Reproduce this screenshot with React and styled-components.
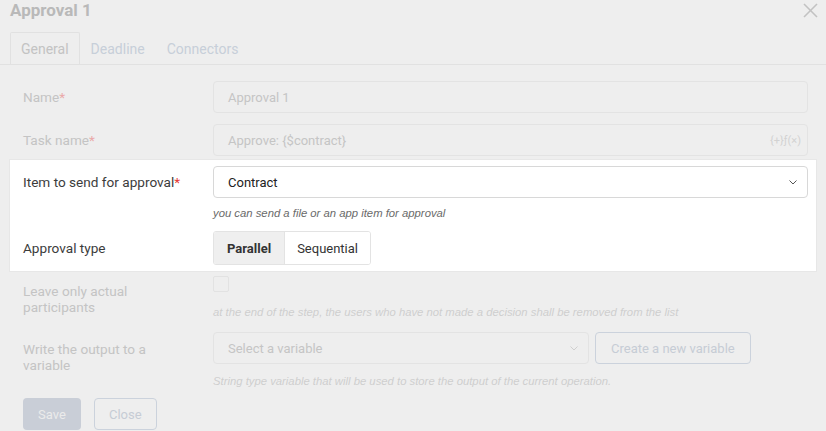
import React from "react";
import styled, { createGlobalStyle } from "styled-components";

const Global = createGlobalStyle`
  html, body { margin: 0; padding: 0; background: #eeeeee; }
  * { box-sizing: border-box; }
`;

const Dialog = styled.div`
  width: 826px;
  height: 431px;
  overflow: hidden;
  background: #eeeeee;
  font-family: Roboto, "Liberation Sans", sans-serif;
  font-size: 13px;
`;

const Header = styled.div`
  display: flex;
  justify-content: space-between;
  align-items: flex-start;
  height: 32px;
  padding: 0 8px 0 10px;
`;

const Title = styled.h1`
  margin: 0;
  font-size: 17px;
  line-height: 20px;
  font-weight: 700;
  color: #b9b9b9;
`;

const CloseIcon = styled.svg`
  margin-top: 3px;
  width: 15px;
  height: 15px;
`;

const Tabs = styled.div`
  display: flex;
  height: 33px;
  padding-left: 10px;
  border-bottom: 1px solid #e1e1e1;
`;

const Tab = styled.div`
  display: flex;
  align-items: center;
  padding: 0 10px;
  height: 33px;
  border: 1px solid ${(p) => (p.$active ? "#e1e1e1" : "transparent")};
  border-bottom: none;
  border-radius: 2px 2px 0 0;
  color: ${(p) => (p.$active ? "#c3c3c3" : "#c7cfd9")};
  font-size: 14px;
`;

const Form = styled.div`
  --label: #c4c4c4;
  --text: #c5c5c5;
  --border: #e3e3e3;
  --field-bg: #eeeeee;
  --hint: #cecece;
  --req: #eaa9a9;
  padding: 16px 18px 0 23px;
  display: flex;
  flex-direction: column;
`;

const Highlight = styled.div`
  --label: #3c3c3c;
  --text: #222222;
  --border: #d8d8d8;
  --field-bg: #ffffff;
  --hint: #6a6a6a;
  --req: #e53935;
  margin: 4px -8px 0 -13px;
  padding: 6px 8px 6px 13px;
  background: #ffffff;
  box-shadow: 0 0 0 1px #e7e7e7;
  display: flex;
  flex-direction: column;
`;

const Row = styled.div`
  display: grid;
  grid-template-columns: 190px 1fr;
  align-items: start;
  margin-top: ${(p) => p.$mt || 0}px;
`;

const Label = styled.div`
  color: var(--label);
  font-size: 13.6px;
  line-height: 16px;
  padding-top: ${(p) => (p.$top != null ? p.$top : 8)}px;
  padding-right: 24px;
`;

const Req = styled.span`
  color: var(--req);
`;

const Field = styled.div`
  display: flex;
  flex-direction: column;
  align-items: flex-start;
`;

const Input = styled.div`
  display: flex;
  align-items: center;
  justify-content: space-between;
  height: 32px;
  padding: 0 10px 0 14px;
  border: 1px solid var(--border);
  border-radius: 4px;
  background: var(--field-bg);
  color: var(--text);
  font-size: 13px;
  width: ${(p) => p.$w || "100%"};
`;

const FxTag = styled.span`
  color: #d2d2d2;
  font-size: 11px;
  margin-right: -4px;
`;

const Hint = styled.div`
  font-family: "Liberation Sans", Arial, sans-serif;
  font-style: italic;
  font-size: 11.3px;
  line-height: 14px;
  color: var(--hint);
  margin-top: ${(p) => p.$mt || 8}px;
`;

const Segmented = styled.div`
  display: inline-flex;
  justify-self: start;
  height: 34px;
  border: 1px solid #e3e3e3;
  border-radius: 3px;
  overflow: hidden;
`;

const Segment = styled.div`
  display: flex;
  align-items: center;
  padding: 0 ${(p) => (p.$active ? 13 : 12)}px;
  background: ${(p) => (p.$active ? "#efefef" : "#ffffff")};
  color: #333333;
  font-weight: ${(p) => (p.$active ? 700 : 400)};
  font-size: 13px;
  & + & {
    border-left: 1px solid #e3e3e3;
  }
`;

const Checkbox = styled.div`
  width: 16px;
  height: 16px;
  border: 1px solid #e2e2e2;
  border-radius: 2px;
  background: #eeeeee;
`;

const Inline = styled.div`
  display: flex;
  gap: 6px;
`;

const GhostButton = styled.div`
  display: flex;
  align-items: center;
  justify-content: center;
  height: 32px;
  padding: 0 ${(p) => p.$px || 14}px;
  border: 1px solid #cbd2dc;
  border-radius: 4px;
  color: #c6ccd5;
  font-size: 13px;
  background: transparent;
`;

const SaveButton = styled.div`
  display: flex;
  align-items: center;
  justify-content: center;
  height: 32px;
  width: 58px;
  border-radius: 4px;
  background: #c9ced7;
  color: #ebebeb;
  font-size: 13px;
`;

const Footer = styled.div`
  display: flex;
  gap: 13px;
  padding: 10px 0 0 23px;
`;

const Chevron = ({ color = "#555" }) => (
  <svg width="8" height="5" viewBox="0 0 8 5">
    <polyline points="0.5,0.5 4,4 7.5,0.5" fill="none" stroke={color} strokeWidth="1" />
  </svg>
);

export default function App() {
  return (
    <>
      <Global />
      <Dialog>
        <Header>
          <Title>Approval 1</Title>
          <CloseIcon viewBox="0 0 15 15">
            <line x1="1" y1="1" x2="14" y2="14" stroke="#c2c2c2" strokeWidth="1.6" />
            <line x1="14" y1="1" x2="1" y2="14" stroke="#c2c2c2" strokeWidth="1.6" />
          </CloseIcon>
        </Header>
        <Tabs>
          <Tab $active>General</Tab>
          <Tab>Deadline</Tab>
          <Tab>Connectors</Tab>
        </Tabs>
        <Form>
          <Row>
            <Label>
              Name<Req>*</Req>
            </Label>
            <Input>Approval 1</Input>
          </Row>
          <Row $mt={11}>
            <Label>
              Task name<Req>*</Req>
            </Label>
            <Input>
              <span>Approve: {"{$contract}"}</span>
              <FxTag>{"{+}"}ƒ(×)</FxTag>
            </Input>
          </Row>
          <Highlight>
            <Row>
              <Label>
                Item to send for approval<Req>*</Req>
              </Label>
              <Field>
                <Input>
                  <span>Contract</span>
                  <Chevron color="#555" />
                </Input>
                <Hint>you can send a file or an app item for approval</Hint>
              </Field>
            </Row>
            <Row $mt={11}>
              <Label $top={9}>Approval type</Label>
              <Segmented>
                <Segment $active>Parallel</Segment>
                <Segment>Sequential</Segment>
              </Segmented>
            </Row>
          </Highlight>
          <Row $mt={5}>
            <Label $top={7}>Leave only actual participants</Label>
            <Field>
              <Checkbox />
              <Hint $mt={13}>
                at the end of the step, the users who have not made a decision shall be removed from the list
              </Hint>
            </Field>
          </Row>
          <Row $mt={13}>
            <Label $top={9}>Write the output to a variable</Label>
            <Field>
              <Inline>
                <Input $w="376px">
                  <span>Select a variable</span>
                  <Chevron color="#cfcfcf" />
                </Input>
                <GhostButton $px={15}>Create a new variable</GhostButton>
              </Inline>
              <Hint $mt={10}>
                String type variable that will be used to store the output of the current operation.
              </Hint>
            </Field>
          </Row>
        </Form>
        <Footer>
          <SaveButton>Save</SaveButton>
          <GhostButton>Close</GhostButton>
        </Footer>
      </Dialog>
    </>
  );
}
